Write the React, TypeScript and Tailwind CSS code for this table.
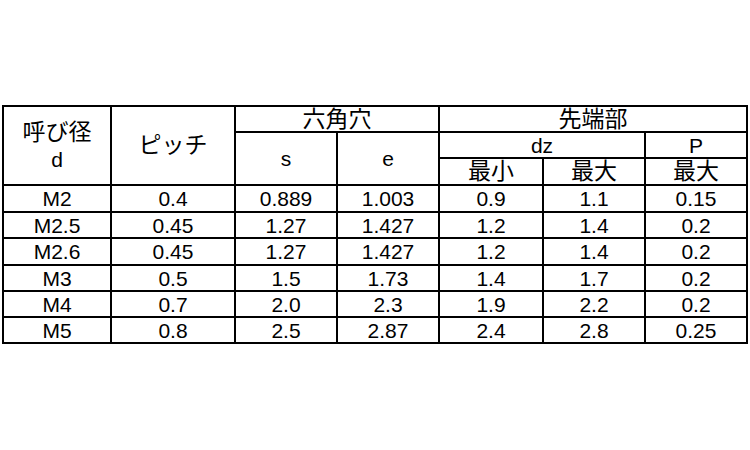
import React from "react";

const rows = [
  ["M2", "0.4", "0.889", "1.003", "0.9", "1.1", "0.15"],
  ["M2.5", "0.45", "1.27", "1.427", "1.2", "1.4", "0.2"],
  ["M2.6", "0.45", "1.27", "1.427", "1.2", "1.4", "0.2"],
  ["M3", "0.5", "1.5", "1.73", "1.4", "1.7", "0.2"],
  ["M4", "0.7", "2.0", "2.3", "1.9", "2.2", "0.2"],
  ["M5", "0.8", "2.5", "2.87", "2.4", "2.8", "0.25"],
];

const cell = "bg-white flex items-center justify-center leading-none";
const jp = "text-[23px]";

export default function App() {
  return (
    <div
      className="w-[750px] h-[450px] bg-white text-black text-[21px] pt-[105px] pl-[2px]"
      style={{ fontFamily: '"Liberation Sans", "Noto Sans CJK JP", sans-serif' }}
    >
      <div className="w-[746px] h-[239px] bg-black p-[2px] grid gap-[2px] grid-cols-[106px_122px_100px_100px_102px_100px_100px] grid-rows-[24px_24px_25px_25px_24px_25px_24px_24px_24px]">
        <div className={`${cell} row-span-3 flex-col gap-[5px]`}>
          <span className={jp}>呼び径</span>
          <span>d</span>
        </div>
        <div className={`${cell} ${jp} row-span-3`}>ピッチ</div>
        <div className={`${cell} ${jp} col-span-2`}>六角穴</div>
        <div className={`${cell} ${jp} col-span-3`}>先端部</div>
        <div className={`${cell} row-span-2`}>s</div>
        <div className={`${cell} row-span-2`}>e</div>
        <div className={`${cell} col-span-2`}>dz</div>
        <div className={cell}>P</div>
        <div className={`${cell} ${jp}`}>最小</div>
        <div className={`${cell} ${jp}`}>最大</div>
        <div className={`${cell} ${jp}`}>最大</div>
        {rows.map((r, i) =>
          r.map((v, j) => (
            <div key={`${i}-${j}`} className={cell}>
              {v}
            </div>
          ))
        )}
      </div>
    </div>
  );
}
